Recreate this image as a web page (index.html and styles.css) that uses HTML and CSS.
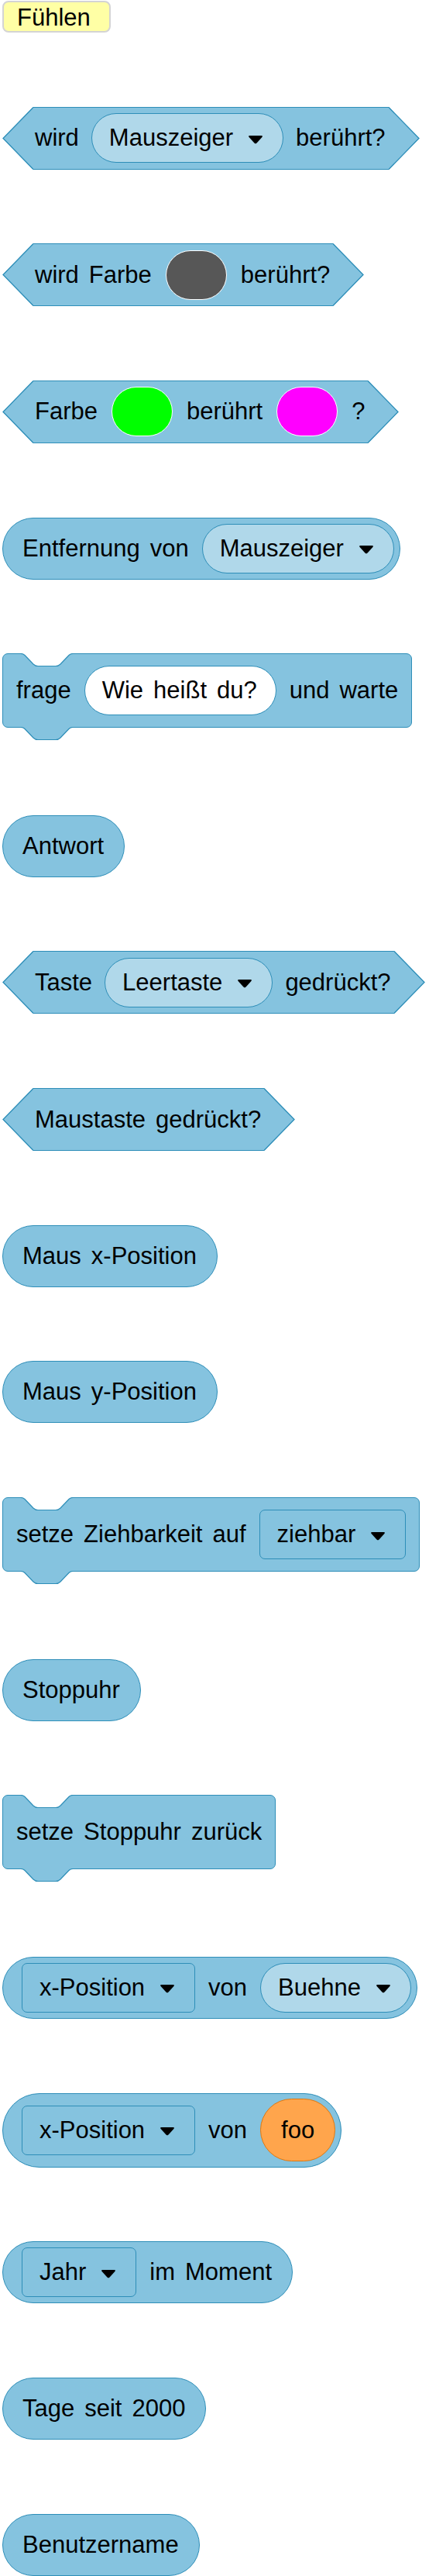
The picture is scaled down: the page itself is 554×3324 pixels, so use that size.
FILE: index.html
```html
<!DOCTYPE html>
<html lang="de">
<head>
<meta charset="utf-8">
<title>Fühlen</title>
<link rel="stylesheet" href="styles.css">
</head>
<body>
<div class="page">
  <div class="cat">Fühlen</div>

  <div class="hex">
    <svg class="tip" viewBox="0 0 40 81"><path class="tf" d="M40 0L0.6 40.5L40 81Z"/><path class="ts" d="M40 0.5L1 40.5L40 80.5"/></svg>
    <div class="hex-body">
      <span>wird</span>
      <div class="dd round"><span>Mauszeiger</span><svg class="arr" viewBox="0 0 20 12"><path d="M2.5 1H17.5Q19.8 1 18.4 2.9L11.6 10.6Q10 12.2 8.4 10.6L1.6 2.9Q0.2 1 2.5 1Z"/></svg></div>
      <span>berührt?</span>
    </div>
    <svg class="tip" viewBox="0 0 40 81"><path class="tf" d="M0 0L39.4 40.5L0 81Z"/><path class="ts" d="M0 0.5L39 40.5L0 80.5"/></svg>
  </div>

  <div class="hex">
    <svg class="tip" viewBox="0 0 40 81"><path class="tf" d="M40 0L0.6 40.5L40 81Z"/><path class="ts" d="M40 0.5L1 40.5L40 80.5"/></svg>
    <div class="hex-body">
      <span>wird Farbe</span>
      <div class="sw sw-gray"></div>
      <span>berührt?</span>
    </div>
    <svg class="tip" viewBox="0 0 40 81"><path class="tf" d="M0 0L39.4 40.5L0 81Z"/><path class="ts" d="M0 0.5L39 40.5L0 80.5"/></svg>
  </div>

  <div class="hex">
    <svg class="tip" viewBox="0 0 40 81"><path class="tf" d="M40 0L0.6 40.5L40 81Z"/><path class="ts" d="M40 0.5L1 40.5L40 80.5"/></svg>
    <div class="hex-body">
      <span>Farbe</span>
      <div class="sw sw-green"></div>
      <span>berührt</span>
      <div class="sw sw-magenta"></div>
      <span>?</span>
    </div>
    <svg class="tip" viewBox="0 0 40 81"><path class="tf" d="M0 0L39.4 40.5L0 81Z"/><path class="ts" d="M0 0.5L39 40.5L0 80.5"/></svg>
  </div>

  <div class="rep end-input">
    <span>Entfernung von</span>
    <div class="dd round"><span>Mauszeiger</span><svg class="arr" viewBox="0 0 20 12"><path d="M2.5 1H17.5Q19.8 1 18.4 2.9L11.6 10.6Q10 12.2 8.4 10.6L1.6 2.9Q0.2 1 2.5 1Z"/></svg></div>
  </div>

  <div class="stack">
    <svg class="notch" viewBox="0 0 70 18"><path class="nf" d="M0 0H70V0.5H68Q65 0.5 63 2.5L52 14Q49.5 16.5 46 16.5H23Q19.5 16.5 17 14L6 2.5Q4 0.5 1 0.5H0Z"/><path class="ns" d="M0 0.5H1Q4 0.5 6 2.5L17 14Q19.5 16.5 23 16.5H46Q49.5 16.5 52 14L63 2.5Q65 0.5 68 0.5H70"/></svg>
    <div class="stack-body">
      <span>frage</span>
      <div class="txt">Wie heißt du?</div>
      <span>und warte</span>
    </div>
    <svg class="tab" viewBox="0 0 70 18"><path class="tbf" d="M0 0H70V0.5H68Q65 0.5 63 2.5L52 14Q49.5 16.5 46 16.5H23Q19.5 16.5 17 14L6 2.5Q4 0.5 1 0.5H0Z"/><path class="ns" d="M0 0.5H1Q4 0.5 6 2.5L17 14Q19.5 16.5 23 16.5H46Q49.5 16.5 52 14L63 2.5Q65 0.5 68 0.5H70"/></svg>
  </div>

  <div class="rep"><span>Antwort</span></div>

  <div class="hex">
    <svg class="tip" viewBox="0 0 40 81"><path class="tf" d="M40 0L0.6 40.5L40 81Z"/><path class="ts" d="M40 0.5L1 40.5L40 80.5"/></svg>
    <div class="hex-body">
      <span>Taste</span>
      <div class="dd round"><span>Leertaste</span><svg class="arr" viewBox="0 0 20 12"><path d="M2.5 1H17.5Q19.8 1 18.4 2.9L11.6 10.6Q10 12.2 8.4 10.6L1.6 2.9Q0.2 1 2.5 1Z"/></svg></div>
      <span>gedrückt?</span>
    </div>
    <svg class="tip" viewBox="0 0 40 81"><path class="tf" d="M0 0L39.4 40.5L0 81Z"/><path class="ts" d="M0 0.5L39 40.5L0 80.5"/></svg>
  </div>

  <div class="hex">
    <svg class="tip" viewBox="0 0 40 81"><path class="tf" d="M40 0L0.6 40.5L40 81Z"/><path class="ts" d="M40 0.5L1 40.5L40 80.5"/></svg>
    <div class="hex-body">
      <span>Maustaste gedrückt?</span>
    </div>
    <svg class="tip" viewBox="0 0 40 81"><path class="tf" d="M0 0L39.4 40.5L0 81Z"/><path class="ts" d="M0 0.5L39 40.5L0 80.5"/></svg>
  </div>

  <div class="rep"><span>Maus x-Position</span></div>

  <div class="rep"><span>Maus y-Position</span></div>

  <div class="stack">
    <svg class="notch" viewBox="0 0 70 18"><path class="nf" d="M0 0H70V0.5H68Q65 0.5 63 2.5L52 14Q49.5 16.5 46 16.5H23Q19.5 16.5 17 14L6 2.5Q4 0.5 1 0.5H0Z"/><path class="ns" d="M0 0.5H1Q4 0.5 6 2.5L17 14Q19.5 16.5 23 16.5H46Q49.5 16.5 52 14L63 2.5Q65 0.5 68 0.5H70"/></svg>
    <div class="stack-body">
      <span>setze Ziehbarkeit auf</span>
      <div class="dd rect"><span>ziehbar</span><svg class="arr" viewBox="0 0 20 12"><path d="M2.5 1H17.5Q19.8 1 18.4 2.9L11.6 10.6Q10 12.2 8.4 10.6L1.6 2.9Q0.2 1 2.5 1Z"/></svg></div>
    </div>
    <svg class="tab" viewBox="0 0 70 18"><path class="tbf" d="M0 0H70V0.5H68Q65 0.5 63 2.5L52 14Q49.5 16.5 46 16.5H23Q19.5 16.5 17 14L6 2.5Q4 0.5 1 0.5H0Z"/><path class="ns" d="M0 0.5H1Q4 0.5 6 2.5L17 14Q19.5 16.5 23 16.5H46Q49.5 16.5 52 14L63 2.5Q65 0.5 68 0.5H70"/></svg>
  </div>

  <div class="rep"><span>Stoppuhr</span></div>

  <div class="stack">
    <svg class="notch" viewBox="0 0 70 18"><path class="nf" d="M0 0H70V0.5H68Q65 0.5 63 2.5L52 14Q49.5 16.5 46 16.5H23Q19.5 16.5 17 14L6 2.5Q4 0.5 1 0.5H0Z"/><path class="ns" d="M0 0.5H1Q4 0.5 6 2.5L17 14Q19.5 16.5 23 16.5H46Q49.5 16.5 52 14L63 2.5Q65 0.5 68 0.5H70"/></svg>
    <div class="stack-body">
      <span>setze Stoppuhr zurück</span>
    </div>
    <svg class="tab" viewBox="0 0 70 18"><path class="tbf" d="M0 0H70V0.5H68Q65 0.5 63 2.5L52 14Q49.5 16.5 46 16.5H23Q19.5 16.5 17 14L6 2.5Q4 0.5 1 0.5H0Z"/><path class="ns" d="M0 0.5H1Q4 0.5 6 2.5L17 14Q19.5 16.5 23 16.5H46Q49.5 16.5 52 14L63 2.5Q65 0.5 68 0.5H70"/></svg>
  </div>

  <div class="rep start-input end-input">
    <div class="dd rect"><span>x-Position</span><svg class="arr" viewBox="0 0 20 12"><path d="M2.5 1H17.5Q19.8 1 18.4 2.9L11.6 10.6Q10 12.2 8.4 10.6L1.6 2.9Q0.2 1 2.5 1Z"/></svg></div>
    <span>von</span>
    <div class="dd round"><span>Buehne</span><svg class="arr" viewBox="0 0 20 12"><path d="M2.5 1H17.5Q19.8 1 18.4 2.9L11.6 10.6Q10 12.2 8.4 10.6L1.6 2.9Q0.2 1 2.5 1Z"/></svg></div>
  </div>

  <div class="rep tall start-input end-input">
    <div class="dd rect"><span>x-Position</span><svg class="arr" viewBox="0 0 20 12"><path d="M2.5 1H17.5Q19.8 1 18.4 2.9L11.6 10.6Q10 12.2 8.4 10.6L1.6 2.9Q0.2 1 2.5 1Z"/></svg></div>
    <span>von</span>
    <div class="foo">foo</div>
  </div>

  <div class="rep start-input">
    <div class="dd rect"><span>Jahr</span><svg class="arr" viewBox="0 0 20 12"><path d="M2.5 1H17.5Q19.8 1 18.4 2.9L11.6 10.6Q10 12.2 8.4 10.6L1.6 2.9Q0.2 1 2.5 1Z"/></svg></div>
    <span>im Moment</span>
  </div>

  <div class="rep"><span>Tage seit 2000</span></div>

  <div class="rep"><span>Benutzername</span></div>
</div>
</body>
</html>
```

FILE: styles.css
```css
:root {
  --fill: #85c3df;
  --line: #2e8eb8;
  --light: #b0d8ea;
}

html, body {
  margin: 0;
  padding: 0;
  background: #ffffff;
}

body {
  font-family: "Liberation Sans", Arial, Helvetica, sans-serif;
  font-size: 31px;
  color: #000000;
  word-spacing: 4.4px;
}

.page {
  display: flex;
  flex-direction: column;
  align-items: flex-start;
  gap: 95.65px;
  padding: 1px 0 0 3px;
}

.page span {
  white-space: nowrap;
}

/* category label */
.cat {
  box-sizing: border-box;
  width: 140px;
  height: 41px;
  padding: 2px 0 0 17px;
  line-height: 35px;
  background: #ffffa5;
  border: 2px solid #d4d4d4;
  border-radius: 8px;
  white-space: nowrap;
}

/* hexagonal predicate */
.hex {
  display: flex;
  align-items: stretch;
  height: 81px;
}

.tip {
  display: block;
  width: 40px;
  height: 81px;
  flex-shrink: 0;
}

.tf {
  fill: var(--fill);
}

.ts {
  fill: none;
  stroke: var(--line);
  stroke-width: 1.3;
}

.hex-body {
  box-sizing: border-box;
  display: flex;
  align-items: center;
  gap: 16px;
  height: 81px;
  padding: 0 4px 0 2px;
  background: var(--fill);
  border-top: 1px solid var(--line);
  border-bottom: 1px solid var(--line);
}

/* round reporter */
.rep {
  box-sizing: border-box;
  display: flex;
  align-items: center;
  gap: 17px;
  height: 80px;
  padding: 0 26px 0 25px;
  background: var(--fill);
  border: 1px solid var(--line);
  border-radius: 40px;
}

.rep.start-input {
  padding-left: 24px;
}

.rep.end-input {
  padding-right: 7px;
}

.rep.tall {
  height: 96px;
  border-radius: 48px;
}

/* dropdown inputs */
.dd {
  box-sizing: border-box;
  display: flex;
  align-items: center;
  gap: 19px;
  height: 64px;
  padding: 0 25px 0 22px;
  border: 1px solid var(--line);
}

.dd.round {
  background: var(--light);
  border-radius: 32px;
}

.dd.rect {
  background: var(--fill);
  border-radius: 7px;
}

.arr {
  display: block;
  width: 20px;
  height: 12px;
  margin-top: 3px;
  fill: #000000;
}

/* text input */
.txt {
  box-sizing: border-box;
  display: flex;
  align-items: center;
  height: 64px;
  padding: 0 24px 0 22px;
  background: #ffffff;
  border: 1px solid var(--line);
  border-radius: 32px;
  white-space: nowrap;
}

/* colour swatches */
.sw {
  box-sizing: border-box;
  width: 79px;
  height: 64px;
  margin: 0 2px;
  border: 1.5px solid #ffffff;
  border-radius: 32px;
}

.sw-gray {
  background: #575757;
}

.sw-green {
  background: #00ff00;
}

.sw-magenta {
  background: #ff00ff;
}

/* orange sprite reporter */
.foo {
  box-sizing: border-box;
  display: flex;
  align-items: center;
  height: 81px;
  padding: 0 26px;
  background: #ffa54c;
  border: 1px solid #e0780f;
  border-radius: 41px;
}

/* stack (command) block */
.stack {
  display: flex;
  flex-direction: column;
  align-items: flex-start;
}

.notch {
  display: block;
  width: 70px;
  height: 18px;
  flex-shrink: 0;
  margin-left: 23px;
  margin-bottom: -18px;
  z-index: 1;
}

.tab {
  display: block;
  width: 70px;
  height: 18px;
  flex-shrink: 0;
  margin-left: 23px;
  margin-top: -1px;
  z-index: 1;
}

.nf {
  fill: #ffffff;
}

.tbf {
  fill: var(--fill);
}

.ns {
  fill: none;
  stroke: var(--line);
  stroke-width: 1.2;
}

.stack-body {
  box-sizing: border-box;
  display: flex;
  align-items: center;
  gap: 17px;
  height: 96px;
  padding: 0 17px;
  background: var(--fill);
  border: 1px solid var(--line);
  border-radius: 7px;
}
```
